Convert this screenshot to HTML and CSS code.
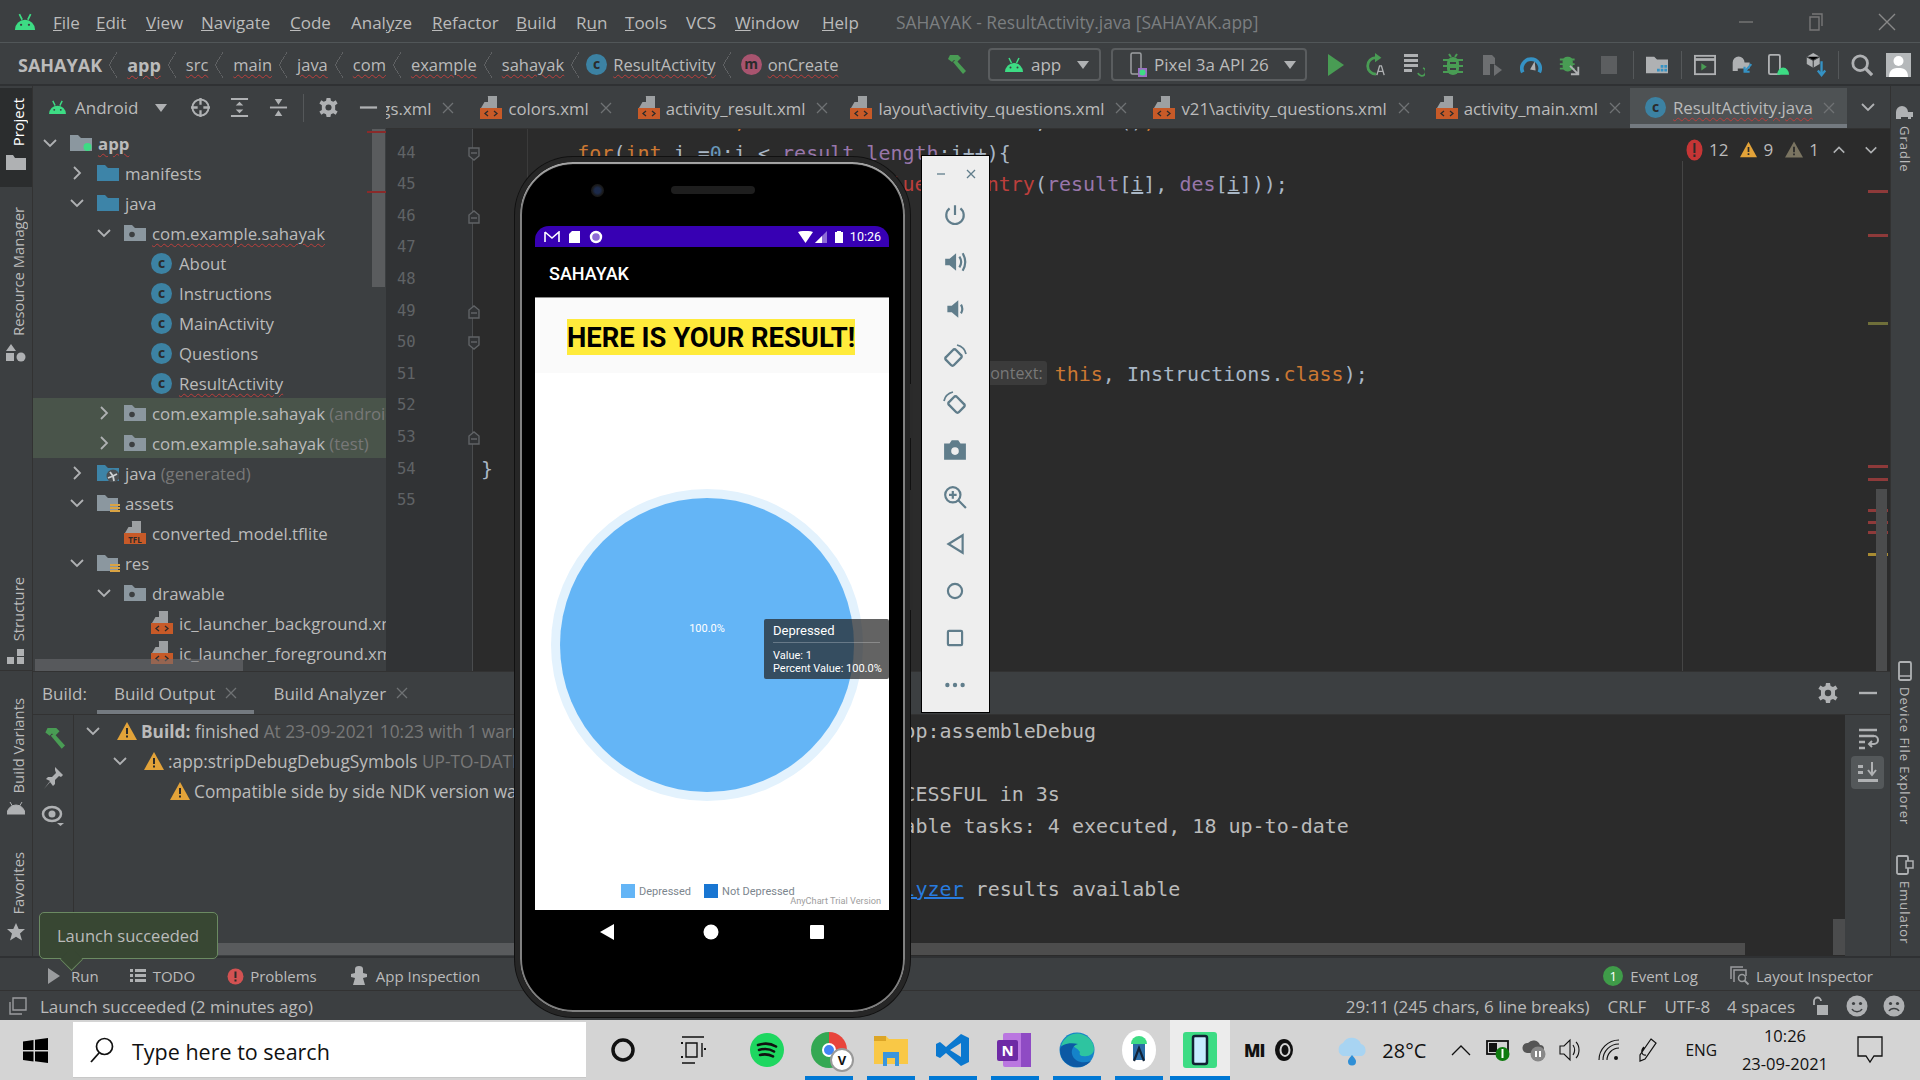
FILE: index.html
```html
<!DOCTYPE html>
<html lang="en">
<head>
  <meta charset="UTF-8" />
  <title>SAHAYAK - ResultActivity.java</title>
  <link rel="stylesheet" href="styles.css">
</head>
<body>

<svg class="defs" aria-hidden="true">
  <symbol id="android" viewBox="0 0 20 16"><path d="M1 15a9 9 0 0 1 18 0z" fill="#3ddc84"/><path d="M5 1l2.5 5M15 1l-2.500 5" stroke="#3ddc84" stroke-width="1.500"/><circle cx="6.500" cy="10.500" r="1" fill="#3c3f41"/><circle cx="13.500" cy="10.500" r="1" fill="#3c3f41"/></symbol>
  <symbol id="chev-r" viewBox="0 0 16 16"><path d="M5 2l6 6-6 6" fill="none" stroke="#afb1b3" stroke-width="1.800"/></symbol>
  <symbol id="chev-d" viewBox="0 0 16 16"><path d="M2 5l6 6 6-6" fill="none" stroke="#afb1b3" stroke-width="1.800"/></symbol>
  <symbol id="close" viewBox="0 0 12 12"><path d="M1 1l10 10M11 1L1 11" stroke="#6f7274" stroke-width="1.300"/></symbol>
  <symbol id="folder-blue" viewBox="0 0 22 18"><path d="M0 1h8l3 3h11v13H0z" fill="#3d84a8"/></symbol>
  <symbol id="folder-pkg" viewBox="0 0 22 18"><path d="M0 1h8l3 3h11v13H0z" fill="#8b979f"/><circle cx="8" cy="10.500" r="2.800" fill="#3c3f41"/></symbol>
  <symbol id="folder-app" viewBox="0 0 22 18"><path d="M0 1h8l3 3h11v13H0z" fill="#8b979f"/><circle cx="17.500" cy="13" r="4" fill="#3ddc84"/></symbol>
  <symbol id="folder-res" viewBox="0 0 23 19"><path d="M0 1h8l3 3h10v13H0z" fill="#8b979f"/><path d="M13 10h10v2H13zM13 13h10v2H13zM13 16h10v2H13z" fill="#d9a343"/></symbol>
  <symbol id="folder-gen" viewBox="0 0 22 18"><path d="M0 1h8l3 3h11v13H0z" fill="#3d84a8"/><circle cx="16" cy="12" r="6.500" fill="#4b4f52"/><path d="M16 12l-3-4M16 12l4-2M16 12l1 5M16 12l-5 2" stroke="#cfd2d4" stroke-width="1.800"/></symbol>
  <symbol id="xml" viewBox="0 0 22 24"><path d="M8 0h9v12H1z" fill="#9da0a2"/><path d="M8 0v6H2" fill="#3c3f41"/><rect y="12" width="22" height="11" fill="#c75a28"/><path d="M8 15l-3 2.500 3 2.500M14 15l3 2.500-3 2.500" fill="none" stroke="#2b2b2b" stroke-width="1.300"/></symbol>
  <symbol id="warn" viewBox="0 0 20 18"><path d="M10 0l10 18H0z" fill="#e3a339"/><path d="M9 6h2v6H9zM9 13.500h2v2H9z" fill="#2b2b2b"/></symbol>
  <symbol id="gear" viewBox="0 0 20 20"><path d="M8 0h4l.6 3 2.400 1 2.600-1.600 2 3.400L17 7.500v5l2.600 1.700-2 3.400-2.600-1.600-2.400 1-.6 3H8l-.6-3-2.400-1-2.600 1.600-2-3.400L3 12.500v-5L.400 5.800l2-3.400L5 4l2.400-1z" fill="#afb1b3"/><circle cx="10" cy="10" r="3.200" fill="#3c3f41"/></symbol>
  <symbol id="hammer" viewBox="0 0 22 22"><path d="M6 1l8 0 3 3-4 4-3-2-2 2-4-3z" fill="#499c54"/><path d="M9 8l3-2 10 11-3 3z" fill="#499c54"/></symbol>
  <symbol id="emu-x" viewBox="0 0 12 12"><path d="M2 2l8 8M10 2l-8 8" stroke="#607d8b" stroke-width="1.300"/></symbol>
</svg>

<header class="titlebar">
  <svg class="logo"><use href="#android"/></svg>
  <nav class="menu">
    <span class="w-file"><u>F</u>ile</span>
    <span class="w-edit"><u>E</u>dit</span>
    <span class="w-view"><u>V</u>iew</span>
    <span class="w-navigate"><u>N</u>avigate</span>
    <span class="w-code"><u>C</u>ode</span>
    <span class="w-analyze">Anal<u>y</u>ze</span>
    <span class="w-refactor"><u>R</u>efactor</span>
    <span class="w-build"><u>B</u>uild</span>
    <span class="w-run">R<u>u</u>n</span>
    <span class="w-tools"><u>T</u>ools</span>
    <span class="w-vcs">VCS</span>
    <span class="w-window"><u>W</u>indow</span>
    <span class="w-help"><u>H</u>elp</span>
  </nav>
  <div class="win-title">SAHAYAK - ResultActivity.java [SAHAYAK.app]</div>
  <div class="win-btns">
    <svg width="16" height="16"><path d="M1 8h14" stroke="#777" stroke-width="1.400"/></svg>
    <svg width="16" height="18"><path d="M4 1h10v12M2 4h9v13H2z" fill="none" stroke="#777" stroke-width="1.400"/></svg>
    <svg width="18" height="18"><path d="M1 1l16 16M17 1L1 17" stroke="#888" stroke-width="1.400"/></svg>
  </div>
</header>

<div class="navbar">
  <div class="crumbs">
    <b>SAHAYAK</b><i class="sep"></i>
    <b class="squig">app</b><i class="sep"></i>
    <span class="squig">src</span><i class="sep"></i>
    <span class="squig">main</span><i class="sep"></i>
    <span class="squig">java</span><i class="sep"></i>
    <span class="squig">com</span><i class="sep"></i>
    <span class="squig">example</span><i class="sep"></i>
    <span class="squig">sahayak</span><i class="sep sep-ico"></i>
    <span class="cls-ico">c</span><span class="squig crumb-after">ResultActivity</span><i class="sep"></i>
    <span class="cls-ico method">m</span><span class="squig crumb-after">onCreate</span>
  </div>
  <div class="nav-tools">
    <svg class="hammer"><use href="#hammer"/></svg>
    <div class="combo combo-app"><svg width="20" height="16"><use href="#android"/></svg><span>app</span><i class="caret"></i></div>
    <div class="combo combo-device">
      <svg width="18" height="26" viewBox="0 0 18 26"><rect x="1" y="1" width="10" height="21" rx="1.500" fill="none" stroke="#9da0a2" stroke-width="1.500"/><rect x="8" y="16" width="9" height="9" fill="#9c6fc4"/><circle cx="12.500" cy="20.500" r="3" fill="#3ddc84"/></svg>
      <span>Pixel 3a API 26</span><i class="caret"></i>
    </div>
    <div class="run-icons">
      <svg viewBox="0 0 20 24"><path d="M2 1l16 11L2 23z" fill="#499c54"/></svg>
      <svg viewBox="0 0 24 26"><path d="M13 5a9 9 0 1 0 0 18" fill="none" stroke="#499c54" stroke-width="3"/><path d="M12 0l7 5-7 5z" fill="#499c54"/><path d="M14 24l3-10h2l3 10M15.500 20h5" fill="none" stroke="#afb1b3" stroke-width="1.500"/></svg>
      <svg viewBox="0 0 22 24"><path d="M1 1h14v3H1zM1 6h14v3H1zM1 11h14v3H1zM1 16h8v3H1z" fill="#afb1b3"/><path d="M20 15a4 4 0 1 1-5 5" fill="none" stroke="#499c54" stroke-width="1.800"/></svg>
      <svg viewBox="0 0 22 24"><rect x="5" y="4" width="12" height="18" rx="6" fill="#499c54"/><path d="M1 7h20M1 13h20M1 19h20M7 1l2 3M15 1l-2 3" stroke="#499c54" stroke-width="2"/><path d="M8 10h6M8 16h6" stroke="#3c3f41" stroke-width="2"/></svg>
      <svg viewBox="0 0 22 24"><path d="M2 2h9l3 3v6H9v11H2z" fill="#6d6f71"/><path d="M13 11l8 6-8 6z" fill="#6d6f71"/></svg>
      <svg viewBox="0 0 24 24"><path d="M3 20a10 10 0 1 1 18 0" fill="none" stroke="#3592c4" stroke-width="4"/><path d="M11 17l5-9 1 10z" fill="#afb1b3"/></svg>
      <svg viewBox="0 0 22 26"><rect x="3" y="4" width="11" height="16" rx="5" fill="#499c54"/><path d="M0 7h16M0 12h16M0 17h16" stroke="#499c54" stroke-width="2"/><path d="M11 14l9 9M20 15v8h-8" fill="none" stroke="#afb1b3" stroke-width="2"/></svg>
      <svg viewBox="0 0 20 24"><rect x="2" y="3" width="16" height="18" fill="#5c5e60"/></svg>
      <i class="tool-sep"></i>
      <svg viewBox="0 0 24 24"><path d="M0 3h9l3 3h12v15H0z" fill="#afb1b3"/><path d="M16 12h3v3h-3zM20 12h3v3h-3zM16 16h3v3h-3zM20 16h3v3h-3zM12 16h3v3h-3z" fill="#3592c4"/></svg>
      <i class="tool-sep"></i>
      <svg class="tight" viewBox="0 0 24 24"><rect x="1" y="2" width="22" height="20" fill="none" stroke="#afb1b3" stroke-width="2"/><path d="M1 6h22" stroke="#afb1b3" stroke-width="3"/><path d="M8 10l6 4-6 4z" fill="#499c54"/></svg>
      <svg class="tight" viewBox="0 0 26 24"><path d="M2 18V9a7 7 0 0 1 14 0h6v7h-3v3h-3v-3H8v3H2z" fill="#afb1b3"/><path d="M24 11l-8 9m0-6v6h6" fill="none" stroke="#3592c4" stroke-width="2.500"/></svg>
      <svg class="tight" viewBox="0 0 24 24"><rect x="1" y="1" width="12" height="21" rx="1.500" fill="none" stroke="#afb1b3" stroke-width="2"/><path d="M10 23a6 6 0 0 1 13 0z" fill="#3ddc84" transform="translate(0 -5) scale(1 1.200)"/></svg>
      <svg class="tight" viewBox="0 0 20 26"><path d="M7 0l7 4v8l-7 4-7-4V4z" fill="#afb1b3"/><path d="M7 8v8M0 4l7 4 7-4" stroke="#3c3f41" stroke-width="1.200"/><path d="M16 9v14m-4-4l4 5 4-5" fill="none" stroke="#3592c4" stroke-width="2.500"/></svg>
      <i class="tool-sep"></i>
      <svg viewBox="0 0 24 24"><circle cx="10" cy="10" r="8" fill="none" stroke="#afb1b3" stroke-width="3"/><path d="M15 15l8 8" stroke="#afb1b3" stroke-width="3.500"/></svg>
    </div>
    <div class="avatar"><svg viewBox="0 0 25 24"><circle cx="12.500" cy="8" r="5" fill="#fff"/><path d="M3 24c0-8 5-9 9.500-9S22 16 22 24z" fill="#fff"/></svg></div>
  </div>
</div>

<div class="workspace">
  <aside class="stripe stripe-left">
    <div class="stripe-top">
      <div class="st-item st-project"><span class="vtext">Project</span><svg width="20" height="16" viewBox="0 0 20 16"><path d="M0 1h7l2 3h11v12H0z" fill="#afb1b3"/></svg></div>
      <div class="st-item st-resource"><span class="vtext">Resource Manager</span><svg width="20" height="18" viewBox="0 0 20 18"><path d="M5 0l5 7H0zM0 9h8v8H0z" fill="#afb1b3"/><circle cx="15" cy="13" r="4.500" fill="#afb1b3"/></svg></div>
      <div class="st-item st-structure"><span class="vtext">Structure</span><svg width="18" height="16" viewBox="0 0 18 16"><path d="M10 0h7v7h-7zM0 8h7v7H0zM10 8h7v7h-7z" fill="#afb1b3"/></svg></div>
    </div>
    <div class="stripe-bottom">
      <div class="st-item st-variants"><span class="vtext">Build Variants</span><svg width="18" height="14"><path d="M0 13a9 9 0 0 1 18 0zM3 1l3 5M15 1l-3 5" fill="#afb1b3" stroke="#afb1b3"/></svg></div>
      <div class="st-item st-favorites"><span class="vtext">Favorites</span><svg width="18" height="18" viewBox="0 0 18 18"><path d="M9 0l2.700 6H18l-5 4.500L15 17.500 9 13.800 3 17.500 5 10.500 0 6h6.300z" fill="#afb1b3"/></svg></div>
    </div>
  </aside>

  <div class="center">
    <div class="upper">
      <section class="project">
        <div class="project-head">
          <svg class="p-android"><use href="#android"/></svg>
          <span class="p-title">Android</span>
          <i class="caret p-caret"></i>
          <svg class="p-ico p-first" viewBox="0 0 20 20"><circle cx="10" cy="10" r="8.500" fill="none" stroke="#afb1b3" stroke-width="2"/><path d="M10 0v7M10 13v7M0 10h7M13 10h7" stroke="#afb1b3" stroke-width="2.400"/></svg>
          <svg class="p-ico" viewBox="0 0 20 20"><path d="M1 1h18M1 19h18" stroke="#afb1b3" stroke-width="2"/><path d="M10 4l4 4H6zM6 12h8l-4 4z" fill="#afb1b3"/></svg>
          <svg class="p-ico" viewBox="0 0 20 20"><path d="M1 10h18" stroke="#afb1b3" stroke-width="2"/><path d="M6 1h8l-4 6zM10 13l4 6H6z" fill="#afb1b3"/></svg>
          <i class="p-sep"></i>
          <svg class="p-ico" viewBox="0 0 20 20"><use href="#gear"/></svg>
          <svg class="p-ico p-min" viewBox="0 0 20 20"><path d="M1 10h18" stroke="#afb1b3" stroke-width="2.400"/></svg>
        </div>
        <div class="tree">
          <div class="row lv0"><svg class="chev"><use href="#chev-d"/></svg><svg class="ico"><use href="#folder-app"/></svg><b class="squig">app</b></div>
          <div class="row lv1"><svg class="chev"><use href="#chev-r"/></svg><svg class="ico"><use href="#folder-blue"/></svg>manifests</div>
          <div class="row lv1"><svg class="chev"><use href="#chev-d"/></svg><svg class="ico"><use href="#folder-blue"/></svg>java</div>
          <div class="row lv2"><svg class="chev"><use href="#chev-d"/></svg><svg class="ico"><use href="#folder-pkg"/></svg><span class="squig">com.example.sahayak</span></div>
          <div class="row lv3"><i class="chev"></i><span class="cls-ico">c</span>About</div>
          <div class="row lv3"><i class="chev"></i><span class="cls-ico">c</span>Instructions</div>
          <div class="row lv3"><i class="chev"></i><span class="cls-ico">c</span>MainActivity</div>
          <div class="row lv3"><i class="chev"></i><span class="cls-ico">c</span>Questions</div>
          <div class="row lv3"><i class="chev"></i><span class="cls-ico">c</span><span class="squig">ResultActivity</span></div>
          <div class="row lv2 test"><svg class="chev"><use href="#chev-r"/></svg><svg class="ico"><use href="#folder-pkg"/></svg>com.example.sahayak&nbsp;<em>(androidTest)</em></div>
          <div class="row lv2 test"><svg class="chev"><use href="#chev-r"/></svg><svg class="ico"><use href="#folder-pkg"/></svg>com.example.sahayak&nbsp;<em>(test)</em></div>
          <div class="row lv1"><svg class="chev"><use href="#chev-r"/></svg><svg class="ico"><use href="#folder-gen"/></svg>java&nbsp;<em>(generated)</em></div>
          <div class="row lv1"><svg class="chev"><use href="#chev-d"/></svg><svg class="ico ico-tall"><use href="#folder-res"/></svg>assets</div>
          <div class="row lv2"><i class="chev"></i><svg class="ico ico-file" viewBox="0 0 22 24"><path d="M8 0h9v12H1z" fill="#9da0a2"/><path d="M8 0v6H2" fill="#3c3f41"/><rect y="12" width="22" height="11" fill="#c75a28"/><text x="11" y="21.500" class="tfl">TFL</text></svg>converted_model.tflite</div>
          <div class="row lv1"><svg class="chev"><use href="#chev-d"/></svg><svg class="ico ico-tall"><use href="#folder-res"/></svg>res</div>
          <div class="row lv2"><svg class="chev"><use href="#chev-d"/></svg><svg class="ico"><use href="#folder-pkg"/></svg>drawable</div>
          <div class="row lv3"><i class="chev"></i><svg class="ico ico-file"><use href="#xml"/></svg>ic_launcher_background.xml</div>
          <div class="row lv3"><i class="chev"></i><svg class="ico ico-file"><use href="#xml"/></svg>ic_launcher_foreground.xml</div>
        </div>
        <i class="tree-vbar"></i>
        <i class="tree-mark tree-mark-a"></i>
        <i class="tree-mark tree-mark-b"></i>
        <i class="tree-hbar"></i>
      </section>

      <section class="editor">
        <div class="tabs">
          <div class="tab tab-cut"><span>strings.xml</span><svg class="x"><use href="#close"/></svg></div>
          <div class="tab"><svg class="tab-ico"><use href="#xml"/></svg><span>colors.xml</span><svg class="x"><use href="#close"/></svg></div>
          <div class="tab tab-tight"><svg class="tab-ico"><use href="#xml"/></svg><span>activity_result.xml</span><svg class="x"><use href="#close"/></svg></div>
          <div class="tab"><svg class="tab-ico"><use href="#xml"/></svg><span>layout\activity_questions.xml</span><svg class="x"><use href="#close"/></svg></div>
          <div class="tab"><svg class="tab-ico"><use href="#xml"/></svg><span>v21\activity_questions.xml</span><svg class="x"><use href="#close"/></svg></div>
          <div class="tab"><svg class="tab-ico"><use href="#xml"/></svg><span>activity_main.xml</span><svg class="x"><use href="#close"/></svg></div>
          <div class="tab tab-active"><span class="cls-ico">c</span><span class="squig">ResultActivity.java</span><svg class="x"><use href="#close"/></svg></div>
          <svg class="tabs-more"><use href="#chev-d"/></svg>
        </div>
        <div class="editor-body">
          <div class="gutter">
            <div class="ln">43</div>
            <div class="ln">44<svg class="fold"><path d="M1 1h10v8l-5 4-5-4zM3 6h6" fill="#313335" stroke="#606366" stroke-width="1.400"/></svg></div>
            <div class="ln">45</div>
            <div class="ln">46<svg class="fold"><path d="M1 13h10V5L6 1 1 5zM3 8h6" fill="#313335" stroke="#606366" stroke-width="1.400"/></svg></div>
            <div class="ln">47</div>
            <div class="ln">48</div>
            <div class="ln">49<svg class="fold"><path d="M1 13h10V5L6 1 1 5zM3 8h6" fill="#313335" stroke="#606366" stroke-width="1.400"/></svg></div>
            <div class="ln">50<svg class="fold"><path d="M1 1h10v8l-5 4-5-4zM3 6h6" fill="#313335" stroke="#606366" stroke-width="1.400"/></svg></div>
            <div class="ln">51</div>
            <div class="ln">52</div>
            <div class="ln">53<svg class="fold"><path d="M1 13h10V5L6 1 1 5zM3 8h6" fill="#313335" stroke="#606366" stroke-width="1.400"/></svg></div>
            <div class="ln">54</div>
            <div class="ln">55</div>
          </div>
          <pre class="code">                     <span class="op">,</span>                        ,      ()<span class="op">;</span>
        <span class="kw">for</span>(<span class="kw">int</span> i =<span class="num">0</span>;i &lt; <span class="fld">result</span>.<span class="fld">length</span>;i++){
            dataEntries.add(<span class="kw">new</span> <span class="err">ValueDataEntry</span>(<span class="fld">result</span>[<span class="idx">i</span>], <span class="fld">des</span>[<span class="idx">i</span>]));
        }


    }
    <span class="kw">public void</span> goBack(View view) {
        Intent intent = <span class="kw">new</span> Intent(     <span class="hint">context:</span><span class="kw">this</span>, Instructions.<span class="kw">class</span>);
        startActivity(intent);
    }
}
</pre>
          <i class="indent-guide"></i>
          <i class="margin-line"></i>
          <div class="inspections">
            <svg width="17" height="22" viewBox="0 0 17 22"><ellipse cx="8.500" cy="11" rx="8" ry="10.500" fill="#c53535"/><path d="M7.500 4h2v10h-2zM7.500 15.500h2v2.500h-2z" fill="#2b2b2b"/></svg><span>12</span>
            <svg class="ins-warn" width="17" height="19"><use href="#warn"/></svg><span>9</span>
            <svg class="ins-weak" width="18" height="19" viewBox="0 0 20 18"><path d="M10 0l10 18H0z" fill="#7a7461"/><path d="M9 6h2v6H9zM9 13.500h2v2H9z" fill="#2b2b2b"/></svg><span>1</span>
            <svg class="ins-up" width="14" height="14" viewBox="0 0 16 16"><path d="M2 11l6-6 6 6" fill="none" stroke="#afb1b3" stroke-width="1.800"/></svg>
            <svg class="ins-down" width="14" height="14"><use href="#chev-d"/></svg>
          </div>
          <i class="mark red" style="top:61px"></i>
          <i class="mark red" style="top:105px"></i>
          <i class="mark olive" style="top:193px"></i>
          <i class="mark red" style="top:336px"></i>
          <i class="mark red" style="top:349px"></i>
          <i class="mark red" style="top:380px"></i>
          <i class="mark red" style="top:392px"></i>
          <i class="mark red" style="top:402px"></i>
          <i class="mark yellow" style="top:424px"></i>
          <i class="editor-vbar"></i>
        </div>
      </section>
    </div>

    <section class="lower">
      <div class="lower-head">
        <span class="lh-label">Build:</span>
        <div class="lh-tab lh-active">Build Output<svg class="x"><use href="#close"/></svg></div>
        <div class="lh-tab">Build Analyzer<svg class="x"><use href="#close"/></svg></div>
        <div class="lh-right">
          <svg width="20" height="20"><use href="#gear"/></svg>
          <svg width="20" height="20"><path d="M1 10h18" stroke="#afb1b3" stroke-width="2.400"/></svg>
        </div>
      </div>
      <div class="lower-body">
        <div class="build-tools">
          <svg width="24" height="24" viewBox="0 0 22 22"><use href="#hammer"/></svg>
          <svg width="22" height="24" viewBox="0 0 22 24"><path d="M13 1l8 8-2 2-2-1-4 4 0 4-2 2-3-4-6 7 6-8-4-2 2-2 4 0 4-4-1-3z" fill="#afb1b3"/></svg>
          <svg width="24" height="22" viewBox="0 0 24 22"><ellipse cx="11" cy="9" rx="9" ry="7" fill="none" stroke="#afb1b3" stroke-width="2.500"/><circle cx="11" cy="9" r="3.500" fill="#afb1b3"/><path d="M16 18h7l-3.500 3z" fill="#afb1b3"/></svg>
        </div>
        <div class="build-tree">
          <div class="b-row b0"><svg class="chev"><use href="#chev-d"/></svg><svg class="b-warn"><use href="#warn"/></svg><b>Build:</b>&nbsp;finished&nbsp;<em>At 23-09-2021 10:23 with 1 warning</em></div>
          <div class="b-row b1"><svg class="chev"><use href="#chev-d"/></svg><svg class="b-warn"><use href="#warn"/></svg>:app:stripDebugDebugSymbols&nbsp;<em>UP-TO-DATE</em></div>
          <div class="b-row b2"><svg class="b-warn"><use href="#warn"/></svg>Compatible side by side NDK version was not found.</div>
          <i class="build-hbar"></i>
        </div>
        <pre class="console">&gt; Task :app:assembleDebug

BUILD SUCCESSFUL in 3s
22 actionable tasks: 4 executed, 18 up-to-date

<a class="link">Build Analyzer</a> results available</pre>
        <i class="console-hbar"></i>
        <i class="console-vbar"></i>
        <div class="console-tools">
          <svg width="24" height="24" viewBox="0 0 24 24"><path d="M3 3h18M3 9h15M3 15h6M3 21h6" stroke="#afb1b3" stroke-width="2.500"/><path d="M18 9a4 4 0 0 1 0 8h-5m3-3l-3 3 3 3" fill="none" stroke="#afb1b3" stroke-width="2"/></svg>
          <div class="ct-on"><svg width="22" height="24" viewBox="0 0 22 24"><path d="M1 4h5v3H1zM1 10h5v3H1zM1 18h20v3H1z" fill="#afb1b3"/><path d="M15 1v12m-4-4l4 5 4-5" fill="none" stroke="#afb1b3" stroke-width="2"/></svg></div>
        </div>
      </div>
    </section>
  </div>

  <aside class="stripe stripe-right">
    <div class="sr-item sr-gradle"><svg width="20" height="16" viewBox="0 0 20 16"><path d="M1 15V8a6 6 0 0 1 12 0h5v5h-2v2h-3v-2H6v2z" fill="#afb1b3"/></svg><span>Gradle</span></div>
    <div class="sr-item sr-device"><svg width="14" height="20" viewBox="0 0 14 20"><rect x="1" y="1" width="12" height="18" rx="1.500" fill="none" stroke="#afb1b3" stroke-width="1.800"/><path d="M1 15h12" stroke="#afb1b3" stroke-width="1.500"/></svg><span>Device File Explorer</span></div>
    <div class="sr-item sr-emu"><svg width="18" height="20" viewBox="0 0 18 20"><rect x="1" y="1" width="11" height="18" rx="1.500" fill="none" stroke="#afb1b3" stroke-width="1.800"/><rect x="10" y="6" width="7" height="7" fill="#3c3f41" stroke="#afb1b3" stroke-width="1.500"/></svg><span>Emulator</span></div>
  </aside>
</div>

<div class="toolstrip">
  <div class="ts-item ts-run"><svg width="12" height="16" viewBox="0 0 12 16"><path d="M0 0l12 8-12 8z" fill="#9a9c9e"/></svg>Run</div>
  <div class="ts-item ts-todo"><svg width="16" height="14" viewBox="0 0 16 14"><path d="M0 0h3v3H0zM5 0h11v3H5zM0 5h3v3H0zM5 5h11v3H5zM0 10h3v3H0zM5 10h11v3H5z" fill="#afb1b3"/></svg>TODO</div>
  <div class="ts-item ts-problems"><svg width="17" height="17" viewBox="0 0 17 17"><circle cx="8.500" cy="8.500" r="8" fill="#d25252"/><path d="M7.500 3.500h2v6.500h-2zM7.500 11.500h2v2h-2z" fill="#2b2b2b"/></svg>Problems</div>
  <div class="ts-item ts-inspect"><svg width="16" height="20" viewBox="0 0 16 20"><path d="M4 3a4 3 0 0 1 8 0v4l4 1v3l-4 1 2 7H2l2-7-4-1V8l4-1z" fill="#afb1b3"/></svg>App Inspection</div>
  <div class="ts-right">
    <div class="ts-item ts-log"><span class="badge">1</span>Event Log</div>
    <div class="ts-item ts-layout"><svg width="20" height="20" viewBox="0 0 20 20"><path d="M1 13V1h12M4 16V4h12v6" fill="none" stroke="#9a9c9e" stroke-width="1.500"/><circle cx="12" cy="12" r="3.500" fill="none" stroke="#9a9c9e" stroke-width="1.500"/><path d="M14.500 14.500l4 4" stroke="#9a9c9e" stroke-width="1.800"/></svg>Layout Inspector</div>
  </div>
</div>

<footer class="statusbar">
  <svg class="sb-box" width="18" height="18" viewBox="0 0 18 18"><path d="M1 5v12h12M4 1h13v12H4z" fill="none" stroke="#9a9c9e" stroke-width="1.400"/></svg>
  <span>Launch succeeded (2 minutes ago)</span>
  <div class="sb-right">
    <span class="sb-pos">29:11 (245 chars, 6 line breaks)</span>
    <span class="sb-crlf">CRLF</span>
    <span class="sb-utf">UTF-8</span>
    <span class="sb-spaces">4 spaces</span>
    <svg class="sb-lock" width="18" height="20" viewBox="0 0 18 20"><path d="M3 9V5a3.500 3.500 0 0 1 7 0" fill="none" stroke="#afb1b3" stroke-width="1.800"/><rect x="6" y="9" width="11" height="10" fill="#afb1b3"/></svg>
    <svg class="sb-face" width="22" height="22" viewBox="0 0 22 22"><circle cx="11" cy="11" r="10.500" fill="#afb1b3"/><circle cx="7.500" cy="8.500" r="1.600" fill="#3c3f41"/><circle cx="14.500" cy="8.500" r="1.600" fill="#3c3f41"/><path d="M6 14c2 3.500 8 3.500 10 0" fill="none" stroke="#3c3f41" stroke-width="1.500"/></svg>
    <svg class="sb-face sb-sad" width="22" height="22" viewBox="0 0 22 22"><circle cx="11" cy="11" r="10.500" fill="#afb1b3"/><circle cx="7.500" cy="8.500" r="1.600" fill="#3c3f41"/><circle cx="14.500" cy="8.500" r="1.600" fill="#3c3f41"/><path d="M6 16c2-3.500 8-3.500 10 0" fill="none" stroke="#3c3f41" stroke-width="1.500"/></svg>
  </div>
</footer>

<div class="taskbar">
  <svg class="tb-start" width="25" height="25" viewBox="0 0 25 25"><path d="M0 3.500l10.500-1.500v10H0zM12 1.800L25 0v12H12zM0 13.500h10.500v10L0 22zM12 13.500h13V25l-13-1.800z" fill="#000"/></svg>
  <div class="tb-search">
    <svg width="24" height="26" viewBox="0 0 24 26"><circle cx="14.500" cy="9.500" r="8" fill="none" stroke="#111" stroke-width="1.700"/><path d="M9 16L1 25" stroke="#111" stroke-width="1.800"/></svg>
    <span>Type here to search</span>
  </div>
  <div class="tb-apps">
    <div class="app a-cortana"><svg width="26" height="26" viewBox="0 0 26 26"><circle cx="13" cy="13" r="10" fill="none" stroke="#111" stroke-width="3.500"/></svg></div>
    <div class="app a-task"><svg width="26" height="30" viewBox="0 0 26 30"><path d="M2 2h22M2 28h13M6 8h11v14H6zM22 8v14" fill="none" stroke="#111" stroke-width="1.400"/><path d="M1 8h2M1 22h2M24 14h2" stroke="#111" stroke-width="2"/></svg></div>
    <div class="app a-spotify"><svg width="34" height="34" viewBox="0 0 34 34"><circle cx="17" cy="17" r="17" fill="#1ed760"/><path d="M8 12c6-2 13-1.500 18 1.500M9 17c5-1.500 11-1 15 1.500M10 22c4-1 9-.7 13 1.300" fill="none" stroke="#111" stroke-width="2.600" stroke-linecap="round"/></svg></div>
    <div class="app a-chrome on"><div class="chrome"><i></i></div><span class="chrome-user">V</span></div>
    <div class="app a-folder on"><svg width="34" height="32" viewBox="0 0 34 32"><path d="M0 2h12l3 3h19v25H0z" fill="#f9c846"/><path d="M0 2h12v5H0z" fill="#dca526"/><path d="M9 18h16v14h-4v-8h-8v8H9z" fill="#3a96dd"/></svg></div>
    <div class="app a-vscode on"><svg width="34" height="34" viewBox="0 0 34 34"><path d="M25 1l8 4v24l-8 4-15-13-6 5-4-2V11l4-2 6 5zM25 10L14 17l11 7z" fill="#0a78cf"/></svg></div>
    <div class="app a-onenote on"><svg width="36" height="36" viewBox="0 0 36 36"><rect x="6" y="1" width="28" height="34" rx="2" fill="#ba77e0"/><path d="M24 1h10v34H24z" fill="#8f4bc4"/><rect y="8" width="21" height="21" rx="2" fill="#6e2aa5"/><text x="10.500" y="24" class="on-letter">N</text></svg></div>
    <div class="app a-edge on"><svg width="36" height="36" viewBox="0 0 36 36"><circle cx="18" cy="18" r="17.500" fill="#1583c9"/><path d="M2 14C5 4 15 0 22 2c8 2 13 8 13 15 0 5-5 8-11 7-3 0-4-2-3-4-3-5-12-9-19-6z" fill="#2ec4a0"/><path d="M1 18c0 10 8 17 17 17 6 0 10-2 14-6-8 3-17 1-19-7-1-5 2-9 6-10-8-2-18 0-18 6z" fill="#0c59a4"/></svg></div>
    <div class="app a-studio on"><svg width="34" height="40" viewBox="0 0 34 40"><ellipse cx="17" cy="20" rx="17" ry="20" fill="#fff"/><path d="M9 14a8 8 0 0 1 16 0z" fill="#3ddc84"/><path d="M11 14h12v16H11z" fill="#2b6ea8"/><path d="M12 31l5-13 5 13" fill="none" stroke="#12243a" stroke-width="2.200"/></svg></div>
    <div class="app a-emu on current"><svg width="34" height="36" viewBox="0 0 34 36"><rect width="34" height="36" rx="3" fill="#3ddc84"/><rect x="10" y="4" width="14" height="28" rx="2" fill="#c5ecff" stroke="#123" stroke-width="2.500"/></svg></div>
  </div>
  <div class="tray">
    <span class="tray-mi">MI</span>
    <svg class="tray-swirl" width="20" height="24" viewBox="0 0 20 24"><ellipse cx="10" cy="12" rx="9" ry="11" fill="#111"/><ellipse cx="11" cy="12" rx="4.500" ry="6" fill="none" stroke="#d4d4d4" stroke-width="2"/></svg>
    <svg class="tray-cloud" width="34" height="32" viewBox="0 0 34 32"><path d="M8 22a7 7 0 0 1 0-13 10 10 0 0 1 18 1 6.500 6.500 0 0 1 1 12z" fill="#a8d4f2"/><path d="M17 21c3 3.500 4 5 4 6.500a4 4 0 0 1-8 0c0-1.500 1-3 4-6.500z" fill="#2f8fd6"/></svg>
    <span class="tray-temp">28°C</span>
    <svg class="tray-up" width="20" height="12" viewBox="0 0 20 12"><path d="M1 11l9-9 9 9" fill="none" stroke="#111" stroke-width="1.300"/></svg>
    <svg class="tray-batt" width="24" height="24" viewBox="0 0 24 24"><rect x="1" y="3" width="21" height="13" fill="none" stroke="#111" stroke-width="1.800"/><rect x="3" y="5" width="8" height="9" fill="#111"/><circle cx="16.500" cy="16" r="7" fill="#107c10"/><path d="M16.500 11v9" stroke="#fff" stroke-width="2"/></svg>
    <svg class="tray-od" width="24" height="24" viewBox="0 0 24 24"><path d="M5 15a5 5 0 0 1 1-10 7 7 0 0 1 12 2 4 4 0 0 1 0 8z" fill="#555"/><circle cx="16" cy="16" r="7.500" fill="#888"/><path d="M14 13v6M18 13v6" stroke="#fff" stroke-width="2"/></svg>
    <svg class="tray-vol" width="22" height="24" viewBox="0 0 22 24"><path d="M1 8h4l6-6v20l-6-6H1zM14 7c2 3 2 7 0 10M17 4c4 4 4 12 0 16" fill="none" stroke="#111" stroke-width="1.100"/></svg>
    <svg class="tray-wifi" width="22" height="22" viewBox="0 0 22 22"><path d="M1 21C1 10 10 1 21 1M5 21c0-9 7-16 16-16M9 21c0-6 5-12 12-12" fill="none" stroke="#111" stroke-width="1.100"/><circle cx="18" cy="19" r="2" fill="#111"/></svg>
    <svg class="tray-pen" width="18" height="24" viewBox="0 0 18 24"><path d="M12 1l5 4L6 21l-5 2 0-6zM5 9c-4 4-2 9 2 8" fill="none" stroke="#111" stroke-width="1.200"/></svg>
    <span class="tray-eng">ENG</span>
    <div class="tray-clock"><span>10:26</span><span>23-09-2021</span></div>
    <svg class="tray-note" width="26" height="28" viewBox="0 0 26 28"><path d="M1 1h24v19h-8l-4 6-4-6H1z" fill="none" stroke="#111" stroke-width="1.300"/></svg>
  </div>
</div>

<!-- emulator sits on top of the IDE -->
<div class="phone">
  <i class="camera"></i>
  <i class="speaker"></i>
  <i class="side-btn side-a"></i>
  <i class="side-btn side-b"></i>
  <div class="screen">
    <div class="statusrow">
      <svg width="16" height="12" viewBox="0 0 16 12"><path d="M1 1l7 6 7-6v10M1 11V1" fill="none" stroke="#fff" stroke-width="1.600"/></svg>
      <svg class="s-sd" width="11" height="12" viewBox="0 0 11 12"><path d="M3 0h8v12H0V3z" fill="#fff"/></svg>
      <svg class="s-dot" width="14" height="14" viewBox="0 0 14 14"><circle cx="7" cy="7" r="5" fill="#8e6bd6" stroke="#fff" stroke-width="2.400"/></svg>
      <div class="s-right">
        <svg width="15" height="12" viewBox="0 0 15 12"><path d="M0 1c4-1.500 11-1.500 15 0L7.500 12z" fill="#fff"/></svg>
        <svg width="12" height="12" viewBox="0 0 12 12"><path d="M12 0v12H0z" fill="#8e6bd6"/><path d="M7 5v7H0z" fill="#fff"/></svg>
        <svg class="s-batt" width="8" height="12" viewBox="0 0 8 12"><path d="M2 1V0h4v1h2v11H0V1z" fill="#fff"/></svg>
        <span>10:26</span>
      </div>
    </div>
    <div class="appbar">SAHAYAK</div>
    <div class="result-head"><h1>HERE IS YOUR RESULT!</h1></div>
    <div class="chart">
      <svg class="pie" width="312" height="312" viewBox="0 0 312 312">
        <circle cx="156" cy="156" r="156" fill="#e3f2fd"/>
        <circle cx="156" cy="156" r="147" fill="#64b5f6"/>
        <text x="156" y="143" class="pie-label">100.0%</text>
      </svg>
      <div class="chart-tip">
        <div class="tip-title">Depressed</div>
        <div class="tip-body">Value: 1<br>Percent Value: 100.0%</div>
      </div>
      <div class="legend">
        <i class="sw sw-a"></i><span>Depressed</span>
        <i class="sw sw-b"></i><span>Not Depressed</span>
      </div>
      <div class="trial">AnyChart Trial Version</div>
    </div>
    <svg class="softkeys" width="354" height="44" viewBox="0 0 354 44"><path d="M65 22l14-8v16z" fill="#fff"/><circle cx="176" cy="22" r="7.500" fill="#fff"/><rect x="275" y="15" width="14" height="14" rx="1" fill="#fff"/></svg>
  </div>
</div>

<div class="emu-panel">
  <div class="emu-head"><svg width="12" height="12" viewBox="0 0 12 12"><path d="M2 6h8" stroke="#607d8b" stroke-width="1.300"/></svg><svg width="12" height="12"><use href="#emu-x"/></svg></div>
  <button class="emu-btn"><svg viewBox="0 0 22 22"><path d="M6 5a8 8 0 1 0 10 0M11 2v9" fill="none" stroke="#607d8b" stroke-width="2"/></svg></button>
  <button class="emu-btn"><svg viewBox="0 0 22 22"><path d="M2 8h4l6-5v16l-6-5H2z" fill="#607d8b"/><path d="M15 6c2 3 2 7 0 10M18 3c3 5 3 11 0 16" fill="none" stroke="#607d8b" stroke-width="2"/></svg></button>
  <button class="emu-btn"><svg viewBox="0 0 22 22"><path d="M4 8h4l6-5v16l-6-5H4z" fill="#607d8b"/><path d="M16.500 7c1.500 2.500 1.500 5.500 0 8" fill="none" stroke="#607d8b" stroke-width="2"/></svg></button>
  <button class="emu-btn"><svg viewBox="0 0 24 24"><path d="M10 6L3 13a2 2 0 0 0 0 3l5 5a2 2 0 0 0 3 0l7-7a2 2 0 0 0 0-3l-5-5a2 2 0 0 0-3 0z" fill="none" stroke="#607d8b" stroke-width="2.400"/><path d="M14 1c4 1 8 4 9 9" fill="none" stroke="#607d8b" stroke-width="1.800"/></svg></button>
  <button class="emu-btn"><svg viewBox="0 0 24 24"><path d="M14 6l7 7a2 2 0 0 1 0 3l-5 5a2 2 0 0 1-3 0l-7-7a2 2 0 0 1 0-3l5-5a2 2 0 0 1 3 0z" fill="none" stroke="#607d8b" stroke-width="2.400"/><path d="M10 1C6 2 2 5 1 10" fill="none" stroke="#607d8b" stroke-width="1.800"/></svg></button>
  <button class="emu-btn"><svg viewBox="0 0 22 22"><path d="M1 5h5l2-3h6l2 3h5v15H1z" fill="#607d8b"/><circle cx="11" cy="12" r="3.500" fill="#eee"/></svg></button>
  <button class="emu-btn"><svg viewBox="0 0 22 22"><circle cx="9" cy="9" r="7" fill="none" stroke="#607d8b" stroke-width="2"/><path d="M14 14l7 7M9 5.500v7M5.500 9h7" stroke="#607d8b" stroke-width="2"/></svg></button>
  <button class="emu-btn"><svg viewBox="0 0 22 22"><path d="M18 3v16L5 11z" fill="none" stroke="#607d8b" stroke-width="2"/></svg></button>
  <button class="emu-btn"><svg viewBox="0 0 22 22"><circle cx="11" cy="11" r="6.500" fill="none" stroke="#607d8b" stroke-width="2"/></svg></button>
  <button class="emu-btn"><svg viewBox="0 0 22 22"><rect x="4.500" y="4.500" width="13" height="13" rx="1" fill="none" stroke="#607d8b" stroke-width="2"/></svg></button>
  <button class="emu-btn"><svg viewBox="0 0 22 22"><circle cx="4" cy="11" r="2" fill="#607d8b"/><circle cx="11" cy="11" r="2" fill="#607d8b"/><circle cx="18" cy="11" r="2" fill="#607d8b"/></svg></button>
</div>

<div class="balloon">Launch succeeded</div>

</body>
</html>
```

FILE: styles.css
```css
:root {
  --ui: "Open Sans", "Noto Sans", sans-serif;
  --mono: "DejaVu Sans Mono", monospace;
  --panel: #3c3f41;
  --edge: #323232;
  --text: #bbbbbb;
}
* { box-sizing: border-box; }
html, body {
  margin: 0;
  width: 1920px;
  height: 1080px;
  overflow: hidden;
}
body {
  position: relative;
  display: flex;
  flex-direction: column;
  background: var(--panel);
  color: var(--text);
  font-family: var(--ui);
  font-size: 17px;
}
.defs { width: 0; height: 0; position: absolute; }
i { display: block; font-style: normal; }
em { font-style: normal; color: #787878; }
svg { display: block; flex: none; }
.squig { text-decoration: underline wavy #bc3f3c 1px; text-underline-offset: 3px; }

/* title bar */
.titlebar {
  height: 43px;
  flex: none;
  display: flex;
  align-items: center;
  padding: 2px 0 0 13px;
  border-bottom: 1px solid #515658;
}
.logo { width: 24px; height: 18px; }
.menu { display: flex; margin-left: 16px; }
.menu span { display: block; white-space: nowrap; }
.w-file { width: 43px; }
.w-edit { width: 50px; }
.w-view { width: 55px; }
.w-navigate { width: 89px; }
.w-code { width: 61px; }
.w-analyze { width: 81px; }
.w-refactor { width: 84px; }
.w-build { width: 60px; }
.w-run { width: 49px; }
.w-tools { width: 61px; }
.w-vcs { width: 49px; }
.w-window { width: 87px; }
.w-help { width: 74px; }
.win-title { color: #7b7e80; white-space: nowrap; font-size: 17.400px; }
.win-btns {
  margin-left: auto;
  display: flex;
  align-items: center;
  gap: 54px;
  padding-right: 24px;
}

/* nav bar */
.navbar {
  height: 43px;
  flex: none;
  display: flex;
  align-items: center;
  padding: 2px 0 0 18px;
  border-bottom: 2px solid #2f3133;
}
.crumbs { display: flex; align-items: center; white-space: nowrap; font-size: 16.500px; }
.crumbs b { font-size: 18px; }
.sep {
  width: 8px;
  height: 26px;
  margin: 0 10px 0 7px;
  background: linear-gradient(to bottom right, transparent 48%, #5f6163 48%, #5f6163 54%, transparent 54%) top / 100% 50% no-repeat,
              linear-gradient(to top right, transparent 48%, #5f6163 48%, #5f6163 54%, transparent 54%) bottom / 100% 50% no-repeat;
}
.sep-ico { margin-right: 7px; }
.cls-ico {
  width: 21px;
  height: 21px;
  flex: none;
  border-radius: 50%;
  background: #3c82a3;
  color: #2b2b2b;
  font: bold 14px/19px var(--ui);
  text-align: center;
}
.cls-ico.method { background: #a8546f; }
.crumb-after { margin-left: 6px; }
.nav-tools {
  position: absolute;
  left: 944px;
  top: 43px;
  height: 43px;
  display: flex;
  align-items: center;
}
.hammer { width: 22px; height: 22px; }
.combo {
  height: 33px;
  display: flex;
  align-items: center;
  border: 2px solid #5a5d5f;
  border-radius: 4px;
  margin-left: 22px;
  padding-left: 14px;
}
.combo-app { width: 113px; gap: 7px; }
.combo-device { width: 196px; margin-left: 10px; padding-left: 17px; gap: 6px; }
.caret {
  width: 0;
  height: 0;
  border-left: 6px solid transparent;
  border-right: 6px solid transparent;
  border-top: 8px solid #afb1b3;
  margin-left: 9px;
}
.run-icons { display: flex; align-items: center; margin-left: 18px; }
.run-icons svg { width: 22px; height: 24px; margin-right: 17px; }
.run-icons svg.tight { margin-right: 15px; }
.tool-sep { width: 1px; height: 28px; background: #55585a; margin: 0 12px 0 -4px; }
.avatar { width: 25px; height: 24px; background: #b5b8ba; margin-left: -4px; }
.avatar svg { width: 25px; height: 24px; }

/* middle */
.workspace { flex: 1; display: flex; min-height: 0; }
.stripe-left {
  width: 33px;
  flex: none;
  display: flex;
  flex-direction: column;
  border-right: 1px solid var(--edge);
}
.stripe-top { height: 585px; display: flex; flex-direction: column; flex: none; border-bottom: 1px solid var(--edge); }
.stripe-bottom { flex: 1; display: flex; flex-direction: column; }
.st-item { display: flex; flex-direction: column; align-items: center; width: 32px; gap: 8px; }
.vtext {
  writing-mode: vertical-rl;
  transform: rotate(180deg);
  font-size: 14.800px;
  white-space: nowrap;
  line-height: 20px;
  margin-left: 4px;
}
.st-project { margin-top: 2px; height: 99px; padding-top: 10px; background: #2b2d2e; color: #fff; }
.st-resource { margin-top: 20px; }
.st-structure { margin-top: auto; padding-bottom: 5px; }
.st-variants { margin-top: 27px; }
.st-favorites { margin-top: auto; padding-bottom: 15px; }

.stripe-right {
  width: 30px;
  flex: none;
  position: relative;
  border-left: 1px solid var(--edge);
  padding-left: 3px;
  font-size: 13px;
  letter-spacing: 1px;
}
.sr-item { display: flex; flex-direction: column; align-items: center; gap: 6px; width: 22px; }
.sr-item span { writing-mode: vertical-rl; white-space: nowrap; line-height: 20px; }
.sr-gradle { margin-top: 18px; }
.sr-device { margin-top: 488px; }
.sr-emu { margin-top: 30px; }

.center { flex: 1; min-width: 0; display: flex; flex-direction: column; }
.upper { height: 585px; flex: none; display: flex; }

/* project tool window */
.project { width: 353px; flex: none; position: relative; overflow: hidden; }
.project-head {
  height: 41px;
  margin-top: 1px;
  display: flex;
  align-items: center;
  padding-left: 15px;
}
.p-android { width: 19px; height: 15px; }
.p-title { margin-left: 8px; width: 73px; }
.p-caret { margin-left: 7px; }
.p-ico { width: 19px; height: 19px; margin-left: 20px; }
.p-first { margin-left: 24px; }
.p-sep { width: 1px; height: 28px; background: #55585a; margin: 0 -5px 0 15px; }
.p-min { margin-left: 21px; }
.tree { font-size: 16.800px; }
.row {
  height: 30px;
  display: flex;
  align-items: center;
  white-space: nowrap;
}
.lv0 { padding-left: 4px; }
.lv1 { padding-left: 31px; }
.lv2 { padding-left: 58px; }
.lv3 { padding-left: 85px; }
.chev { width: 16px; height: 16px; flex: none; margin: 0 12px 0 5px; }
.ico { width: 22px; height: 18px; margin-right: 6px; }
.ico-tall { width: 23px; height: 19px; margin-right: 5px; }
.ico-file { height: 24px; }
.tfl { font: bold 8px var(--ui); fill: #2b2b2b; text-anchor: middle; }
.row .cls-ico { margin-right: 7px; width: 21px; }
.test { background: #49544a; }
.tree-vbar {
  position: absolute;
  left: 339px;
  top: 43px;
  width: 13px;
  height: 158px;
  background: #5a5c5e;
}
.tree-mark { position: absolute; left: 334px; width: 19px; height: 2px; background: #8a2a2a; }
.tree-mark-a { top: 45px; }
.tree-mark-b { top: 105px; }
.tree-hbar {
  position: absolute;
  left: 2px;
  bottom: 0;
  width: 208px;
  height: 12px;
  background: rgba(110, 112, 114, .55);
}

/* editor */
.editor { flex: 1; min-width: 0; display: flex; flex-direction: column; }
.tabs {
  height: 41px;
  margin-top: 2px;
  flex: none;
  display: flex;
  overflow: hidden;
  position: relative;
  font-size: 16.800px;
  border-bottom: 1px solid var(--edge);
}
.tab {
  display: flex;
  align-items: center;
  flex: none;
  padding: 0 13px;
  white-space: nowrap;
}
.tab-ico { width: 22px; height: 24px; margin-right: 6px; }
.x { width: 12px; height: 12px; margin-left: 11px; flex: none; }
.tab-cut { padding-left: 0; margin-left: -40px; }
.tab-tight { padding-right: 9px; }
.tab-active {
  position: absolute;
  left: 1244px;
  top: 0;
  height: 41px;
  width: 217px;
  padding: 3px 15px 0;
  background: #4e5254;
  border-bottom: 5px solid #747a80;
  gap: 7px;
}
.tab-active .x { margin-left: 3px; }
.tabs-more { position: absolute; left: 1474px; top: 11px; width: 16px; height: 16px; margin: 0; }

.editor-body {
  flex: 1;
  min-height: 0;
  display: flex;
  position: relative;
  overflow: hidden;
  background: #2b2b2b;
}
.gutter {
  width: 87px;
  flex: none;
  height: 100%;
  background: #313335;
  border-right: 1px solid #4a4c4e;
}
.ln {
  position: relative;
  height: 31.600px;
  padding-left: 11px;
  color: #606366;
  font: 15.500px/31.600px var(--mono);
}
.ln:first-child { margin-top: -23px; }
.fold { position: absolute; left: 82px; top: 9px; width: 13px; height: 14px; }
.code, .console {
  margin: 0;
  font: 20px/31.600px var(--mono);
  color: #a9b7c6;
}
.code {
  margin: -23px 0 0 8px;
  white-space: pre;
}
.kw { color: #cc7832; }
.fld { color: #9876aa; }
.num { color: #6897bb; }
.err { color: #bc3f3c; }
.op { color: #cc7832; }
.idx { text-decoration: underline; }
.hint {
  display: inline-block;
  width: 84px;
  height: 24px;
  margin-right: 8px;
  padding-right: 4px;
  font: 16px/24px var(--ui);
  text-align: right;
  color: #787878;
  background: #3b3b3b;
  vertical-align: 2px;
  border-radius: 3px;
}
.indent-guide { position: absolute; left: 141px; top: 0; bottom: 0; width: 1px; background: #3b3b3b; }
.margin-line { position: absolute; left: 1296px; top: 32px; bottom: 0; width: 1px; background: #454545; }
.inspections {
  position: absolute;
  left: 1300px;
  top: 9px;
  display: flex;
  align-items: center;
  font-size: 17px;
  gap: 6px;
}
.ins-warn { margin-left: 6px; }
.ins-weak { margin-left: 6px; }
.ins-up { margin-left: 7px; }
.ins-down { margin-left: 12px; }
.mark { position: absolute; left: 1482px; width: 20px; height: 3px; }
.red { background: #8e3a3a; }
.olive { background: #6f6f3a; }
.yellow { background: #a88b32; }
.editor-vbar { position: absolute; left: 1490px; top: 360px; width: 11px; bottom: 0; background: #4b4c4d; }

/* build window */
.lower {
  flex: 1;
  min-height: 0;
  display: flex;
  flex-direction: column;
  border-top: 1px solid var(--edge);
}
.lower-head {
  height: 43px;
  flex: none;
  display: flex;
  align-items: center;
  padding-left: 9px;
  border-bottom: 1px solid var(--edge);
}
.lh-label { width: 55px; }
.lh-tab {
  height: 42px;
  display: flex;
  align-items: center;
  padding: 0 17px;
  margin-right: 2px;
  white-space: nowrap;
}
.lh-active { border-bottom: 4px solid #747a80; padding-top: 4px; }
.lh-tab .x { margin-left: 10px; }
.lh-right { margin-left: auto; display: flex; gap: 20px; padding-right: 12px; }
.lower-body { flex: 1; min-height: 0; display: flex; position: relative; }
.build-tools {
  width: 41px;
  flex: none;
  display: flex;
  flex-direction: column;
  align-items: center;
  gap: 15px;
  padding-top: 12px;
  border-right: 1px solid #323232;
}
.build-tree { width: 441px; flex: none; position: relative; overflow: hidden; padding-top: 1px; font-size: 17.300px; }
.b-row { height: 30px; display: flex; align-items: center; white-space: nowrap; }
.b-row .chev { margin: 0 16px 0 0; }
.b-warn { width: 20px; height: 18px; margin-right: 4px; }
.b0 { padding-left: 11px; }
.b1 { padding-left: 38px; }
.b2 { padding-left: 96px; }
.build-hbar {
  position: absolute;
  left: 0;
  right: 0;
  bottom: 1px;
  height: 12px;
  background: #595b5d;
}
.console {
  flex: 1;
  min-width: 0;
  background: #2b2b2b;
  padding: 1px 0 0 280px;
  white-space: pre;
  color: #bbbbbb;
}
.link { color: #287bde; text-decoration: underline; }
.console-hbar { position: absolute; left: 482px; width: 1230px; bottom: 1px; height: 12px; background: #4d4d4d; }
.console-vbar { position: absolute; left: 1800px; width: 12px; top: 204px; bottom: 1px; background: #4b4c4d; }
.console-tools {
  width: 45px;
  flex: none;
  display: flex;
  flex-direction: column;
  align-items: center;
  padding-top: 12px;
  gap: 5px;
}
.ct-on {
  width: 33px;
  height: 33px;
  background: #54585a;
  border-radius: 4px;
  display: flex;
  align-items: center;
  justify-content: center;
}

/* bottom strips */
.toolstrip {
  height: 34px;
  flex: none;
  display: flex;
  align-items: center;
  padding-top: 4px;
  border-top: 2px solid #2f3133;
  font-size: 15px;
  white-space: nowrap;
}
.ts-item { display: flex; align-items: center; }
.ts-run { margin-left: 48px; gap: 11px; }
.ts-todo { margin-left: 31px; gap: 7px; }
.ts-problems { margin-left: 32px; gap: 6px; }
.ts-inspect { margin-left: 34px; gap: 9px; }
.ts-right { margin-left: auto; display: flex; padding-right: 47px; }
.ts-log { gap: 7px; }
.ts-layout { margin-left: 32px; gap: 6px; }
.badge {
  width: 20px;
  height: 20px;
  border-radius: 50%;
  background: #3f9c49;
  color: #fff;
  font-size: 13px;
  line-height: 20px;
  text-align: center;
}
.statusbar {
  height: 30px;
  flex: none;
  display: flex;
  align-items: center;
  padding: 1px 0 0 9px;
  border-top: 1px solid var(--edge);
  white-space: nowrap;
}
.sb-box { margin-right: 13px; }
.sb-right { margin-left: auto; display: flex; align-items: center; padding-right: 15px; }
.sb-crlf { margin-left: 18px; }
.sb-utf { margin-left: 18px; }
.sb-spaces { margin-left: 17px; }
.sb-lock { margin-left: 16px; }
.sb-face { margin-left: 17px; }
.sb-sad { margin-left: 15px; }

/* windows taskbar */
.taskbar {
  height: 60px;
  flex: none;
  display: flex;
  align-items: center;
  position: relative;
  background: #d4d4d4;
  color: #111;
  font-family: var(--ui);
}
.tb-start { margin-left: 23px; }
.tb-search {
  width: 513px;
  height: 56px;
  margin-left: 25px;
  background: #fff;
  display: flex;
  align-items: center;
  padding: 3px 0 0 17px;
  gap: 18px;
  font-size: 21.500px;
  border-bottom: 1px solid #c8c8c8;
}
.tb-search svg { margin-top: -3px; }
.tb-apps { display: flex; height: 60px; }
.app {
  width: 62px;
  height: 60px;
  display: flex;
  align-items: center;
  justify-content: center;
  position: relative;
  flex: none;
}
.a-cortana { margin-left: 6px; }
.a-task { margin-left: 8px; }
.a-spotify { margin-left: 12px; }
.on::after {
  content: "";
  position: absolute;
  left: 7px;
  right: 7px;
  bottom: 0;
  height: 4px;
  background: #0078d4;
}
.current { background: #ececec; width: 60px; }
.current::after { left: 0; right: 0; }
.on-letter { font: bold 15px var(--ui); fill: #fff; text-anchor: middle; }
.chrome {
  width: 36px;
  height: 36px;
  border-radius: 50%;
  background: conic-gradient(#e8453c 0 25%, #fbbc05 25% 45%, #34a853 45% 100%);
  display: flex;
  align-items: center;
  justify-content: center;
}
.chrome i { width: 14px; height: 14px; border-radius: 50%; background: #4285f4; border: 2px solid #fff; }
.chrome-user {
  position: absolute;
  left: 32px;
  top: 28px;
  width: 24px;
  height: 24px;
  border-radius: 50%;
  background: #fff;
  border: 2px solid #999;
  font: bold 13px/20px var(--ui);
  text-align: center;
}
.tray { display: flex; align-items: center; height: 60px; flex: 1; }
.tray-mi { font: 900 17px var(--ui); margin-left: 14px; letter-spacing: -1px; }
.tray-swirl { margin-left: 10px; }
.tray-cloud { margin-left: 41px; }
.tray-temp { margin-left: 13px; font-size: 20px; }
.tray-up { margin-left: 25px; }
.tray-batt { margin-left: 15px; }
.tray-od { margin-left: 12px; }
.tray-vol { margin-left: 13px; }
.tray-wifi { margin-left: 17px; }
.tray-pen { margin-left: 19px; }
.tray-eng { margin-left: 28px; font-size: 15.500px; }
.tray-clock {
  width: 100px;
  margin-left: 18px;
  display: flex;
  flex-direction: column;
  align-items: center;
  gap: 6px;
  font-size: 16.500px;
  line-height: 22px;
}
.tray-note { margin-left: 22px; }

/* emulator */
.phone {
  position: absolute;
  left: 515px;
  top: 157px;
  width: 395px;
  height: 860px;
  background: #000;
  border: 5px solid #262626;
  border-radius: 58px;
  box-shadow: inset 0 2px 1px #a5a5a5, inset 0 0 0 2px #7f7f7f, 0 0 0 1px #111;
  padding: 64px 0 0 15px;
}
.camera {
  position: absolute;
  left: 71px;
  top: 22px;
  width: 13px;
  height: 13px;
  border-radius: 50%;
  background: radial-gradient(#1c2a4a 30%, #1a1a1a 60%);
}
.speaker {
  position: absolute;
  left: 151px;
  top: 24px;
  width: 84px;
  height: 8px;
  border-radius: 4px;
  background: #1e1e1e;
}
.side-btn { position: absolute; right: -8px; width: 3px; background: #2a2a2a; }
.side-a { top: 222px; height: 54px; }
.side-b { top: 328px; height: 120px; }
.screen { width: 354px; font-family: Roboto, sans-serif; }
.statusrow {
  height: 21px;
  background: #3700b3;
  border-radius: 14px 14px 0 0;
  display: flex;
  align-items: center;
  padding: 0 8px 0 9px;
  color: #fff;
  font-size: 12.500px;
}
.s-sd { margin-left: 9px; }
.s-dot { margin-left: 9px; }
.s-right { margin-left: auto; display: flex; align-items: center; gap: 2px; }
.s-batt { margin: 0 5px 0 6px; }
.appbar {
  height: 51px;
  background: #000;
  color: #fff;
  font-size: 18px;
  font-weight: 500;
  line-height: 53px;
  padding-left: 14px;
  border-bottom: 1px solid #8a8a8a;
}
.result-head {
  height: 75px;
  background: #fafafa;
  padding-top: 21px;
  display: flex;
  justify-content: center;
}
.result-head h1 {
  margin: 0 0 0 -2px;
  height: 36px;
  padding: 0;
  font-size: 27.400px;
  font-weight: 700;
  line-height: 38px;
  color: #000;
  background: #ffeb3b;
  white-space: nowrap;
}
.chart { height: 537px; background: #fff; position: relative; overflow: hidden; padding-top: 116px; }
.pie { margin-left: 16px; }
.pie-label { font: 11px Roboto, sans-serif; fill: #fff; text-anchor: middle; }
.chart-tip {
  position: absolute;
  left: 229px;
  top: 246px;
  width: 125px;
  height: 60px;
  padding: 3px 9px;
  border-radius: 2px;
  background: rgba(33, 33, 33, .7);
  color: #fff;
}
.tip-title {
  font-size: 13px;
  line-height: 18px;
  height: 21px;
  border-bottom: 1px solid rgba(255, 255, 255, .25);
}
.tip-body { font-size: 11px; line-height: 13px; padding-top: 6px; white-space: nowrap; }
.legend {
  display: flex;
  align-items: center;
  margin: 83px 0 0 86px;
  font-size: 11px;
  color: #7c868e;
  white-space: nowrap;
}
.sw { width: 14px; height: 14px; margin-right: 4px; }
.sw-a { background: #64b5f6; }
.sw-b { background: #1976d2; margin-left: 13px; }
.trial { position: absolute; right: 8px; bottom: 4px; font-size: 9.200px; color: #9e9e9e; }

.emu-panel {
  position: absolute;
  left: 921px;
  top: 155px;
  width: 69px;
  height: 558px;
  background: #eeeeee;
  border: 1px solid #000;
}
.emu-head {
  height: 35px;
  display: flex;
  align-items: center;
  justify-content: center;
  gap: 18px;
}
.emu-btn {
  display: flex;
  align-items: center;
  justify-content: center;
  width: 100%;
  height: 47px;
  padding: 0 2px 0 0;
  border: 0;
  background: none;
}
.emu-btn svg { width: 24px; height: 24px; }

.balloon {
  position: absolute;
  left: 39px;
  top: 912px;
  width: 179px;
  height: 47px;
  padding-left: 17px;
  background: #384733;
  border: 1px solid #6b8a62;
  border-radius: 5px;
  font-size: 16.500px;
  line-height: 45px;
}
.balloon::after {
  content: "";
  position: absolute;
  left: 22px;
  top: 45px;
  width: 18px;
  height: 18px;
  background: #384733;
  border-right: 1px solid #6b8a62;
  border-bottom: 1px solid #6b8a62;
  transform: rotate(45deg) scale(.85);
  transform-origin: center;
  margin-top: -8px;
}
```
